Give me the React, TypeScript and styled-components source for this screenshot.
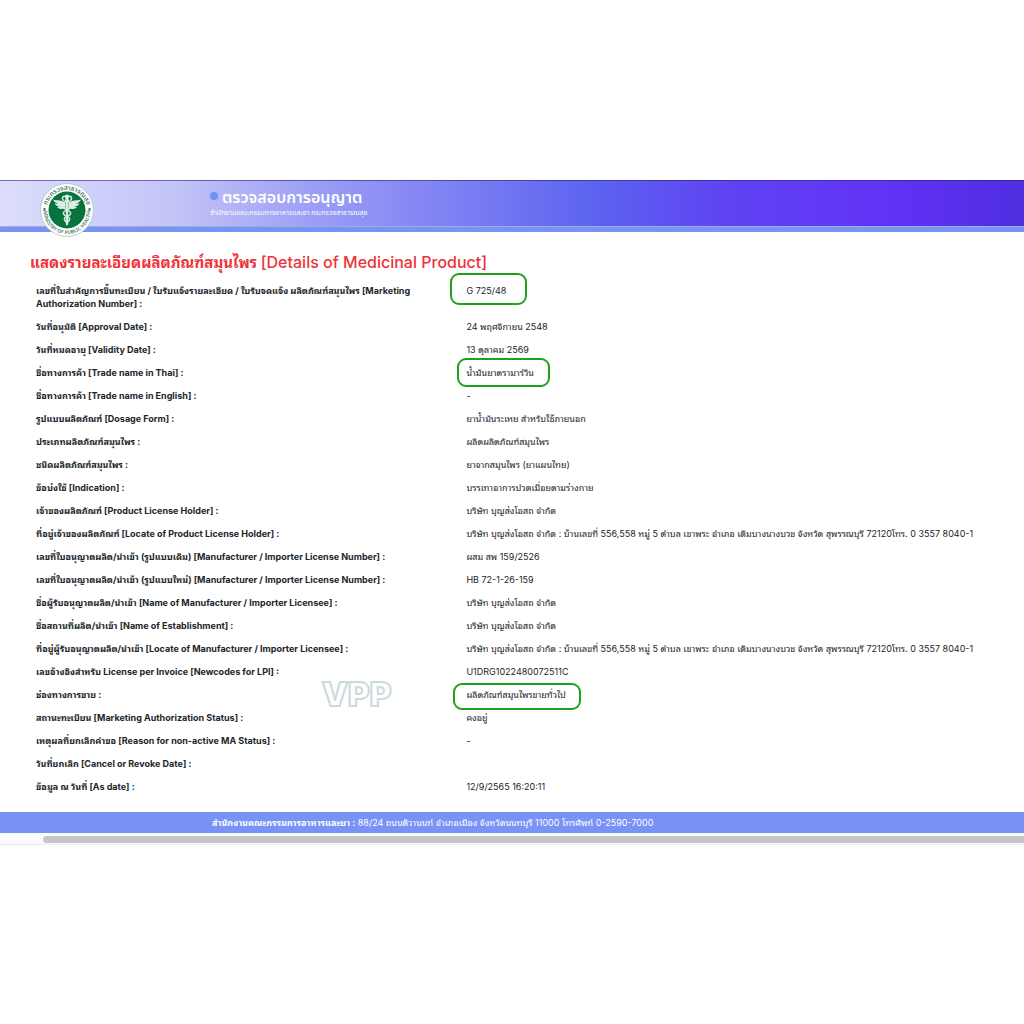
import React from "react";
import styled, { createGlobalStyle } from "styled-components";

const GlobalStyle = createGlobalStyle`
  * { box-sizing: border-box; }
  body {
    margin: 0;
    background: #fff;
    color: #212529;
    font-family: Inter, "Noto Sans Thai Looped", "Noto Sans Thai", "Noto Sans", sans-serif;
  }
`;

const Page = styled.div`
  padding-top: 180px;
  overflow: hidden;
`;

const Header = styled.header`
  position: relative;
  height: 52px;
  padding: 7px 0 0 210px;
  border-top: 1px solid rgba(40, 35, 140, 0.6);
  border-bottom: 5px solid #7892f6;
  background: linear-gradient(90deg, #dcdefb 0%, #c3c4f7 17%, #9b9df5 31%, #8285f3 42%, #5c63ef 58%, #5f43f3 71%, #6132f6 87%, #4f2ee0 100%);
  box-shadow: inset 0 -1px 0 #9fb0d2;
  color: #fff;
`;

const Seal = styled.svg`
  position: absolute;
  left: 40px;
  top: 1px;
  width: 54px;
  height: 55px;
`;

const Brand = styled.div`
  display: flex;
  align-items: center;
  gap: 4px;
  height: 20px;
`;

const Dot = styled.span`
  width: 8px;
  height: 8px;
  margin-bottom: 4px;
  border-radius: 50%;
  background: #6f92f5;
`;

const BrandName = styled.span`
  font: 600 16px/18px "Noto Sans Thai", "Noto Sans", sans-serif;
  white-space: nowrap;
`;

const BrandOffice = styled.div`
  font: 400 7px/10px "Noto Sans Thai", "Noto Sans", sans-serif;
  white-space: nowrap;
`;

const Main = styled.main`
  padding: 18px 0 12px 30px;
`;

const Title = styled.h1`
  margin: 0;
  color: #ee3338;
  font-size: 15px;
  line-height: 24px;
  font-weight: 700;
  white-space: nowrap;
`;

const TitleLatin = styled.span`
  font-size: 16px;
  font-weight: 500;
`;

const Details = styled.table`
  width: 100%;
  margin-top: 6px;
  border-collapse: collapse;
  table-layout: fixed;
  font-size: 9px;
  line-height: 13px;
`;

const LabelColumn = styled.col`
  width: 43%;
`;

const Label = styled.th`
  height: 23px;
  padding: 3px 40px 7px 6px;
  text-align: left;
  vertical-align: top;
  font-weight: 700;
`;

const LabelRow = styled.div`
  display: flex;
  justify-content: space-between;
  align-items: center;
  height: 13px;
`;

const Value = styled.td`
  padding: 3px 0 7px 9px;
  vertical-align: top;
  white-space: nowrap;
`;

const Marked = styled.span<{ $inset: string }>`
  position: relative;
  &::after {
    content: "";
    position: absolute;
    inset: ${(p) => p.$inset};
    border: 2px solid #20a01c;
    border-radius: 9px;
  }
`;

const Watermark = styled.span`
  margin-right: 26px;
  color: #fff;
  font: 900 33px/33px Inter, sans-serif;
  -webkit-text-stroke: 2px #ccdade;
`;

const Footer = styled.footer`
  padding: 2px 0 1px 212px;
  background: #7892f6;
  color: #fff;
  font-size: 9px;
  line-height: 18px;
  white-space: nowrap;
`;

const ScrollTrack = styled.div`
  padding: 3px 0 1px 43px;
  border-bottom: 1px solid #ececec;
  background: #fafafa;
`;

const ScrollThumb = styled.div`
  height: 7px;
  border-radius: 4px 0 0 4px;
  background: #c5c5c5;
`;

type Item = { label: string; value: string; mark?: string; watermark?: boolean };

const address =
  "บริษัท บุญส่งโอสถ จำกัด : บ้านเลขที่ 556,558 หมู่ 5 ตำบล เขาพระ อำเภอ เดิมบางนางบวช จังหวัด สุพรรณบุรี 72120โทร. 0 3557 8040-1";
const company = "บริษัท บุญส่งโอสถ จำกัด";

const items: Item[] = [
  { label: "เลขที่ใบสำคัญการขึ้นทะเบียน / ใบรับแจ้งรายละเอียด / ใบรับจดแจ้ง ผลิตภัณฑ์สมุนไพร [Marketing Authorization Number] :", value: "G 725/48", mark: "-12px -21px -9px -16px" },
  { label: "วันที่อนุมัติ [Approval Date] :", value: "24 พฤศจิกายน 2548" },
  { label: "วันที่หมดอายุ [Validity Date] :", value: "13 ตุลาคม 2569" },
  { label: "ชื่อทางการค้า [Trade name in Thai] :", value: "น้ำมันยาตรามาร์วิน", mark: "-9px -16px -9px -9px" },
  { label: "ชื่อทางการค้า [Trade name in English] :", value: "-" },
  { label: "รูปแบบผลิตภัณฑ์ [Dosage Form] :", value: "ยาน้ำมันระเหย สำหรับใช้ภายนอก" },
  { label: "ประเภทผลิตภัณฑ์สมุนไพร :", value: "ผลิตผลิตภัณฑ์สมุนไพร" },
  { label: "ชนิดผลิตภัณฑ์สมุนไพร :", value: "ยาจากสมุนไพร (ยาแผนไทย)" },
  { label: "ข้อบ่งใช้ [Indication] :", value: "บรรเทาอาการปวดเมื่อยตามร่างกาย" },
  { label: "เจ้าของผลิตภัณฑ์ [Product License Holder] :", value: company },
  { label: "ที่อยู่เจ้าของผลิตภัณฑ์ [Locate of Product License Holder] :", value: address },
  { label: "เลขที่ใบอนุญาตผลิต/นำเข้า (รูปแบบเดิม) [Manufacturer / Importer License Number] :", value: "ผสม สพ 159/2526" },
  { label: "เลขที่ใบอนุญาตผลิต/นำเข้า (รูปแบบใหม่) [Manufacturer / Importer License Number] :", value: "HB 72-1-26-159" },
  { label: "ชื่อผู้รับอนุญาตผลิต/นำเข้า [Name of Manufacturer / Importer Licensee] :", value: company },
  { label: "ชื่อสถานที่ผลิต/นำเข้า [Name of Establishment] :", value: company },
  { label: "ที่อยู่ผู้รับอนุญาตผลิต/นำเข้า [Locate of Manufacturer / Importer Licensee] :", value: address },
  { label: "เลขอ้างอิงสำหรับ License per Invoice [Newcodes for LPI] :", value: "U1DRG1022480072511C" },
  { label: "ช่องทางการขาย :", value: "ผลิตภัณฑ์สมุนไพรขายทั่วไป", mark: "-6px -15px -10px -13px", watermark: true },
  { label: "สถานะทะเบียน [Marketing Authorization Status] :", value: "คงอยู่" },
  { label: "เหตุผลที่ยกเลิกคำขอ [Reason for non-active MA Status] :", value: "-" },
  { label: "วันที่ยกเลิก [Cancel or Revoke Date] :", value: "" },
  { label: "ข้อมูล ณ วันที่ [As date] :", value: "12/9/2565 16:20:11" },
];

function MinistrySeal() {
  return (
    <Seal viewBox="0 0 108 110" role="img" aria-label="กระทรวงสาธารณสุข">
      <defs>
        <path id="seal-top" d="M13 57a41 41 0 0 1 82 0" />
        <path id="seal-bottom" d="M7 57a47 47 0 0 0 94 0" />
      </defs>
      <circle cx="54" cy="56" r="53" fill="#fff" stroke="#a9bfc0" strokeWidth="1.5" />
      <circle cx="54" cy="56" r="37" fill="#08733f" />
      <g fill="#4c7d68" fontFamily='"Noto Sans Thai", "Noto Sans", sans-serif' fontWeight="600" textAnchor="middle">
        <text fontSize="13"><textPath href="#seal-top" startOffset="50%">กระทรวงสาธารณสุข</textPath></text>
        <text fontSize="10"><textPath href="#seal-bottom" startOffset="50%">MINISTRY OF PUBLIC HEALTH</textPath></text>
        <path d="M7 52h4v6H7zM97 52h4v6h-4z" />
      </g>
      <g fill="#dceee3">
        <path d="M51 43C44 34 34 38 26 35c2 5 6 7 10 8-3 1-5 0-7 0 3 5 7 6 11 6-2 1-4 1-6 1 5 5 11 5 17 2zM57 43c7-9 17-5 25-8-2 5-6 7-10 8 3 1 5 0 7 0-3 5-7 6-11 6 2 1 4 1 6 1-5 5-11 5-17 2z" />
        <path d="M51 31h6l-1 50-2 8-2-8z" />
        <circle cx="54" cy="29" r="4" />
      </g>
      <path d="M47 37c-7-8 5-12 7-4s13 10 8 17-18 7-15 14 14 4 12 11-7 5-6 9M61 37c7-8-5-12-7-4s-13 10-8 17 18 7 15 14-14 4-12 11 7 5 6 9" fill="none" stroke="#dceee3" strokeWidth="3" strokeLinecap="round" />
    </Seal>
  );
}

export default function App() {
  return (
    <>
      <GlobalStyle />
      <Page>
        <Header>
          <MinistrySeal />
          <Brand>
            <Dot />
            <BrandName>ตรวจสอบการอนุญาต</BrandName>
          </Brand>
          <BrandOffice>สำนักงานคณะกรรมการอาหารและยา กระทรวงสาธารณสุข</BrandOffice>
        </Header>
        <Main>
          <Title>
            แสดงรายละเอียดผลิตภัณฑ์สมุนไพร <TitleLatin>[Details of Medicinal Product]</TitleLatin>
          </Title>
          <Details>
            <colgroup>
              <LabelColumn />
              <col />
            </colgroup>
            <tbody>
              {items.map((item) => (
                <tr key={item.label}>
                  <Label scope="row">
                    {item.watermark ? (
                      <LabelRow>
                        {item.label}
                        <Watermark>VPP</Watermark>
                      </LabelRow>
                    ) : (
                      item.label
                    )}
                  </Label>
                  <Value>
                    {item.mark ? <Marked $inset={item.mark}>{item.value}</Marked> : item.value}
                  </Value>
                </tr>
              ))}
            </tbody>
          </Details>
        </Main>
        <Footer>
          <strong>สำนักงานคณะกรรมการอาหารและยา :</strong> 88/24 ถนนติวานนท์ อำเภอเมือง จังหวัดนนทบุรี 11000 โทรศัพท์ 0-2590-7000
        </Footer>
        <ScrollTrack>
          <ScrollThumb />
        </ScrollTrack>
      </Page>
    </>
  );
}
